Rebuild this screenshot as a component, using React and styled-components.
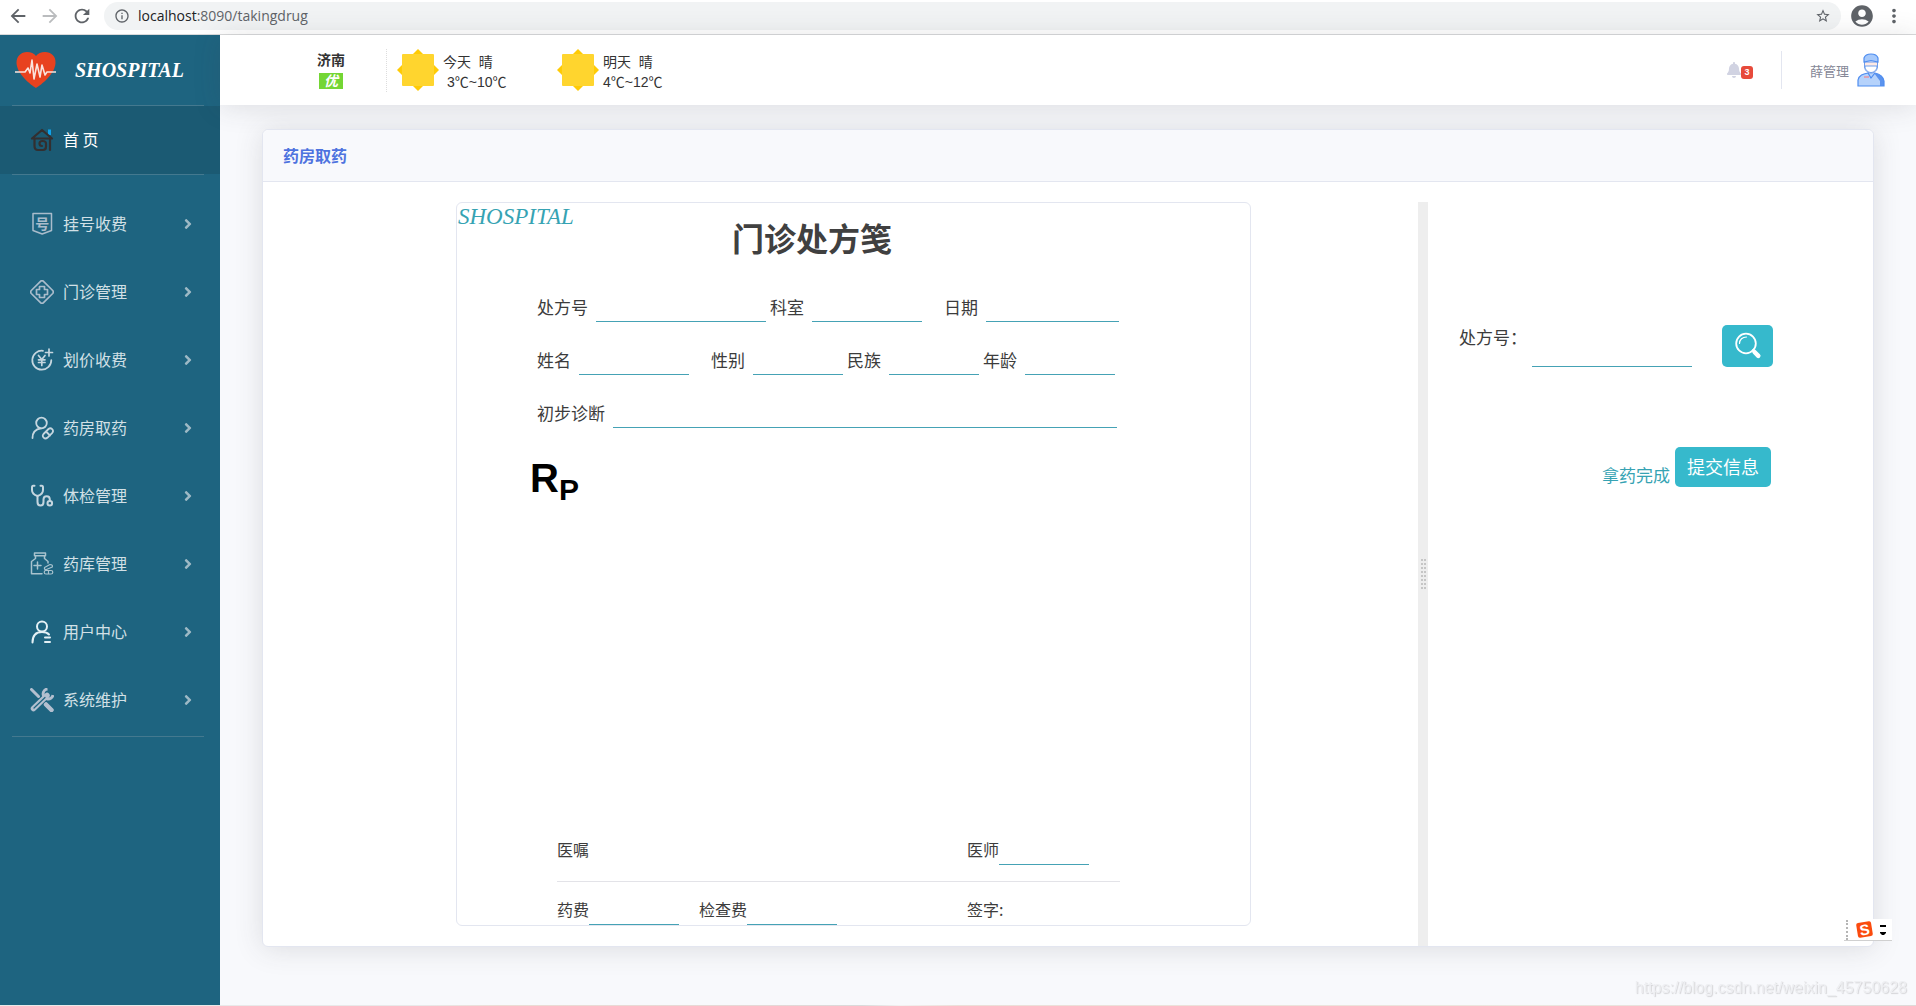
import React, { useState } from "react";
import styled, { createGlobalStyle } from "styled-components";
import {
    MdArrowBack,
    MdArrowForward,
    MdRefresh,
    MdInfoOutline,
    MdStarBorder,
    MdAccountCircle,
    MdMoreVert,
} from "react-icons/md";
import { FaAngleRight, FaBell } from "react-icons/fa";

const GlobalStyle = createGlobalStyle`
    *, *::before, *::after {
        box-sizing: border-box;
    }

    body {
        margin: 0;
        font-family: "Noto Sans CJK SC", "Noto Sans", sans-serif;
        font-size: 16px;
        color: #3c3c3c;
        background: #f8f9fc;
    }

    button, input {
        font: inherit;
    }

    svg {
        display: block;
        flex: none;
    }
`;

const Window = styled.div`
    min-height: 100vh;
    display: flex;
    flex-direction: column;
`;

/* browser toolbar */

const BrowserBar = styled.header`
    display: flex;
    align-items: center;
    gap: 8px;
    padding: 2px 11px 4px 7px;
    background: #ffffff;
    border-bottom: 1px solid #d9dadb;
`;

const BrowserButtons = styled.div`
    display: flex;
    gap: 10px;
    margin-right: 3px;
`;

const IconButton = styled.button`
    display: flex;
    padding: 0;
    border: none;
    background: none;
    cursor: pointer;
    color: ${({ $muted }) => ($muted ? "#babcbe" : "#5f6368")};
`;

const AddressBar = styled.div`
    flex: 1;
    display: flex;
    align-items: center;
    gap: 8px;
    height: 28px;
    padding: 0 10px;
    border-radius: 14px;
    background: #f1f3f4;
    color: #5f6368;
`;

const Address = styled.span`
    flex: 1;
    font-family: "Open Sans", "Noto Sans", sans-serif;
    font-size: 14px;
    line-height: 28px;

    b {
        font-weight: 400;
        color: #202124;
    }
`;

/* sidebar */

const Shell = styled.div`
    flex: 1;
    display: flex;
`;

const Sidebar = styled.nav`
    flex: none;
    width: 220px;
    background: #1e6480;
`;

const Brand = styled.a`
    display: flex;
    align-items: center;
    gap: 18px;
    height: 70px;
    padding: 0 15px;
    font-family: "Liberation Serif", serif;
    font-size: 20px;
    font-style: italic;
    font-weight: 700;
    color: #ffffff;
    text-decoration: none;
`;

const Divider = styled.hr`
    height: 1px;
    margin: 0 16px 0 12px;
    border: none;
    background: #44798f;
`;

const NavList = styled.ul`
    margin: 0;
    padding: ${({ $spaced }) => ($spaced ? "15px 0 2px" : "0")};
    list-style: none;
`;

const NavLink = styled.a`
    display: flex;
    align-items: center;
    gap: 9px;
    height: 68px;
    padding: 0 24px 0 30px;
    color: ${({ $active }) => ($active ? "#ffffff" : "#d2e0e6")};
    background: ${({ $active }) => ($active ? "#1b5a73" : "transparent")};
    text-decoration: none;

    span {
        flex: 1;
        padding-bottom: 3px;
    }
`;

/* top bar */

const Main = styled.div`
    flex: 1;
    min-width: 0;
`;

const Topbar = styled.div`
    display: flex;
    align-items: center;
    justify-content: space-between;
    height: 70px;
    padding: 0 31px 0 97px;
    background: #ffffff;
    box-shadow: 0 2px 28px rgba(58, 59, 69, 0.15);
`;

const Weather = styled.div`
    display: flex;
    align-items: center;
    font-family: "Liberation Sans", "Noto Sans CJK SC", sans-serif;
    font-size: 14px;
    line-height: 20px;
    color: #333333;
`;

const City = styled.div`
    display: flex;
    flex-direction: column;
    align-items: center;
    gap: 4px;
    margin-right: 41px;
    font-weight: 700;
    line-height: 18px;
`;

const AirQuality = styled.em`
    width: 24px;
    line-height: 16px;
    text-align: center;
    color: #ffffff;
    background: #74d634;
`;

const Forecast = styled.div`
    display: flex;
    align-items: center;
    gap: 4px;
    width: 160px;
    padding-left: 10px;
    border-left: 1px dotted ${({ $first }) => ($first ? "#dddddd" : "transparent")};
`;

const ForecastText = styled.div`
    padding-top: 3px;
`;

const Temperature = styled.div`
    padding-left: ${({ $indent }) => ($indent ? "4px" : "0")};
`;

const UserArea = styled.div`
    display: flex;
    align-items: center;
`;

const Alerts = styled.button`
    display: flex;
    align-items: center;
    padding: 0;
    border: none;
    background: none;
    color: #d1d3e2;
    cursor: pointer;

    svg {
        width: 14px;
        height: 16px;
    }
`;

const AlertCount = styled.span`
    width: 12px;
    margin-top: 4px;
    border-radius: 3px;
    background: #e74a3b;
    color: #ffffff;
    font-family: "Liberation Sans", sans-serif;
    font-size: 9px;
    font-weight: 700;
    line-height: 13px;
    text-align: center;
`;

const UserDivider = styled.div`
    width: 1px;
    height: 38px;
    margin: 0 28px;
    background: #e3e6f0;
`;

const UserLink = styled.a`
    display: flex;
    align-items: center;
    gap: 8px;
    font-size: 13px;
    color: #858796;
    text-decoration: none;
`;

/* card */

const Content = styled.main`
    padding: 24px 42px 58px;
`;

const Card = styled.section`
    border: 1px solid #e3e6f0;
    border-radius: 6px;
    background: #ffffff;
    box-shadow: 0 2px 28px rgba(58, 59, 69, 0.15);
`;

const CardTitle = styled.h6`
    margin: 0;
    padding: 0 20px;
    border-bottom: 1px solid #e3e6f0;
    border-radius: 6px 6px 0 0;
    background: #f8f9fc;
    color: #4e73df;
    font-size: 16px;
    font-weight: 700;
    line-height: 51px;
`;

const CardBody = styled.div`
    display: grid;
    grid-template-columns: 1155fr 10px 445fr;
    padding-top: 20px;
`;

const Splitter = styled.div`
    display: flex;
    align-items: center;
    justify-content: center;
    background: #eeeeee;
`;

/* prescription sheet */

const SheetColumn = styled.div`
    display: flex;
    justify-content: center;
    padding: 0 167px 20px 193px;
`;

const Sheet = styled.form`
    flex: 1;
    border: 1px solid #e3e6f0;
    border-radius: 6px;
`;

const SheetHeader = styled.div`
    display: flex;
    align-items: flex-start;
`;

const SheetLogo = styled.div`
    width: 275px;
    padding: 1px 0 0 1px;
    font-family: "Liberation Serif", serif;
    font-size: 23px;
    font-style: italic;
    line-height: 26px;
    color: #36a3b3;
`;

const SheetTitle = styled.h2`
    margin: 0;
    padding: 10px 0 2px;
    font-size: 32px;
    font-weight: 700;
    line-height: 48px;
    color: #404040;
`;

const Patient = styled.div`
    display: flex;
    flex-direction: column;
    gap: 25px;
    width: 580px;
    margin: 31px 0 0 80px;
`;

const Row = styled.div`
    display: flex;
    gap: ${({ $gap }) => $gap || 4}px;
`;

const Field = styled.label`
    display: flex;
    align-items: flex-start;
    flex: ${({ $grow }) => ($grow ? 1 : "none")};
    gap: ${({ $tight }) => ($tight ? 0 : 8)}px;
    margin-right: ${({ $apart }) => ($apart ? 18 : 0)}px;
    font-size: ${({ $tight }) => ($tight ? 16 : 17)}px;
    line-height: ${({ $tight }) => ($tight ? 24 : 26)}px;
    white-space: nowrap;
`;

const Line = styled.input`
    flex: ${({ $width }) => ($width ? "none" : 1)};
    width: ${({ $width }) => ($width ? `${$width}px` : "auto")};
    min-width: 0;
    height: ${({ $tall }) => ($tall ? 42 : 28)}px;
    padding: 0;
    border: none;
    border-bottom: 1px solid #45a2b5;
    background: transparent;
    outline: none;
`;

const Rp = styled.div`
    height: 48px;
    margin: 28px 0 0 73px;
    font-family: "Liberation Sans", sans-serif;
    font-size: 40px;
    font-weight: 700;
    line-height: 44px;
    color: #000000;

    sub {
        font-size: 30px;
        line-height: 30px;
        vertical-align: -8px;
    }
`;

const DrugList = styled.div`
    min-height: 333px;
`;

const SheetFooter = styled.div`
    width: 563px;
    margin-left: 100px;
`;

const FooterRow = styled.div`
    display: grid;
    grid-template-columns: 410px 1fr;
    font-size: 16px;
    line-height: 24px;
`;

const FooterRule = styled.hr`
    height: 1px;
    margin: 16px 0 15px;
    border: none;
    background: #e3e3e8;
`;

/* search panel */

const SearchPanel = styled.form`
    width: 345px;
    padding: 123px 0 0 31px;
    font-size: 17px;
`;

const SearchRow = styled.div`
    display: flex;
    align-items: flex-start;

    label {
        width: 73px;
        line-height: 24px;
        white-space: nowrap;
    }
`;

const Button = styled.button`
    display: flex;
    align-items: center;
    justify-content: center;
    border: none;
    border-radius: 5px;
    background: #36b9cc;
    color: #ffffff;
    cursor: pointer;
`;

const SearchButton = styled(Button)`
    width: 51px;
    height: 42px;
    margin-left: 30px;
`;

const SubmitButton = styled(Button)`
    height: 40px;
    padding: 0 12px 2px;
    font-size: 18px;
`;

const SubmitRow = styled.div`
    display: flex;
    align-items: flex-end;
    justify-content: flex-end;
    gap: 5px;
    margin: 80px 2px 0 0;
`;

const Status = styled.span`
    line-height: 24px;
    color: #36a3b3;
`;

/* things floating over the page */

const ImeBar = styled.div`
    position: fixed;
    right: 24px;
    bottom: 65px;
    display: flex;
    align-items: center;
    justify-content: space-between;
    width: 48px;
    height: 22px;
    padding: 0 6px 0 2px;
    border-bottom: 1px solid #d0d0d0;
    background: #ffffff;
`;

const ImeGrip = styled.div`
    height: 20px;
    border-left: 2px dotted #b5b5b5;
`;

const ImeLogo = styled.span`
    width: 15px;
    border-radius: 2px;
    background: #fb4b0e;
    color: #ffffff;
    font-family: "Liberation Sans", sans-serif;
    font-size: 15px;
    font-weight: 700;
    line-height: 15px;
    text-align: center;
    transform: rotate(-9deg);
`;

const Watermark = styled.div`
    position: fixed;
    right: 9px;
    bottom: 6px;
    font-family: "Liberation Sans", sans-serif;
    font-size: 16px;
    line-height: 24px;
    color: #eeeff2;
    text-shadow: 1px 1px 1px #d4d4d7;
`;

const BottomEdge = styled.div`
    height: 2px;
    background: linear-gradient(to right, #e9e9e9 22%, #ecdcd4 26%, #e6d8d6 40%, #dadada 45%, #f3f1f0 47%, #ecdfd8 50%, #ece6de 80%, #dedad9);
`;

const HeartLogo = () => (
    <svg width="42" height="38" viewBox="0 0 42 38" fill="none">
        <path
            d="M21 37C16 34 2 23 1.500 12C1.500 5 6 1 12 1C16 1 19 2.500 21 5C23 2.500 26 1 30 1C36 1 41 5 40.500 12C40 23 26 34 21 37Z"
            fill="#e8421f"
        />
        <path
            d="M0 21H10L13 17L15 22L17 9L19 28L22 13L25 26L27 14L30 24L32 21H41"
            stroke="#fbe3dc"
            strokeWidth="1.600"
            strokeLinejoin="round"
        />
    </svg>
);

const HomeIcon = () => (
    <svg width="24" height="24" viewBox="0 0 24 24" fill="none" strokeLinecap="round" strokeLinejoin="round">
        <path d="M19.500 7V1.500" stroke="#10a2ea" strokeWidth="3" strokeLinecap="butt" />
        <path
            d="M2 10.500L12 2L22 10.500H2M20 10.500V22M4.500 11V18C4.500 21 6 22 8 22H13C15.500 22 16 20.500 16 18.500V15.500C16 13.500 14 13 12.500 13C10.500 13 9.500 14 9.500 15.500C9.500 18 11 18 12 18"
            stroke="#332f30"
            strokeWidth="2.200"
        />
    </svg>
);

const LineIcon = ({ children, color = "#c5d6df", width = 1.5 }) => (
    <svg
        width="24"
        height="24"
        viewBox="0 0 24 24"
        fill="none"
        stroke={color}
        strokeWidth={width}
        strokeLinecap="round"
        strokeLinejoin="round"
    >
        {children}
    </svg>
);

const RegisterIcon = () => (
    <LineIcon color="#a9bccb">
        <path d="M3 1.500H21.500V18.500L12.200 22L3 18.500Z" />
        <text x="5.200" y="16.500" fontSize="14" fontWeight="700" fill="#a9bccb" stroke="none">
            号
        </text>
    </LineIcon>
);

const ClinicIcon = () => (
    <LineIcon color="#a9bccb" width={1.7}>
        <path d="M10.500 1.300Q12 0 13.500 1.300L22.700 10.500Q24 12 22.700 13.500L13.500 22.700Q12 24 10.500 22.700L1.300 13.500Q0 12 1.300 10.500Z" />
        <path d="M9.500 6.500H14.500V9.500H17.500V14.500H14.500V17.500H9.500V14.500H6.500V9.500H9.500Z" />
    </LineIcon>
);

const PriceIcon = () => (
    <LineIcon width={1.7}>
        <path d="M13 2.800A9.500 9.500 0 1 0 21.300 12M19 1V8M15.500 4.500H22.500" />
        <path d="M8.500 7.500L11.800 11.500L15 7.500M11.800 11.500V17.500M8.500 11.800H15M8.500 14.500H15" />
    </LineIcon>
);

const PharmacyIcon = () => (
    <LineIcon width={1.8}>
        <circle cx="11.500" cy="7" r="5.300" />
        <path d="M2.500 22C2.500 16.500 5.500 13 11 12.300" />
        <path d="M13.500 18L18.500 13A2.700 2.700 0 0 1 22.300 16.800L17.300 21.800A2.700 2.700 0 0 1 13.500 18ZM16 15.500L20 19.500" />
    </LineIcon>
);

const StethoscopeIcon = () => (
    <LineIcon width={2}>
        <path d="M4.500 1.800H3.200Q2 1.800 2 3.500V6C2 9 4 11 7.500 12C11 11 13 9 13 6V3.500Q13 1.800 11.800 1.800H10.500" />
        <path d="M7.500 12V18C7.500 22.800 13.500 22.800 13.500 18V15.500C13.500 11 19.800 11 19.800 15.500V17" />
        <circle cx="19.800" cy="19.300" r="2.300" />
    </LineIcon>
);

const StoreIcon = () => (
    <LineIcon color="#a9c3ce">
        <path d="M4.500 1H15.500V3.800H4.500ZM5.500 4V6.500L1.500 9.500V21.800H12M14.500 4V6.500L18 9.500V11M7.500 10V17M4 13.500H11" />
        <path d="M14.500 15.500L20 12.500Q23 12.500 22.300 15L16.500 17.500Q14 18 14.500 15.500ZM16 18.500H21Q22.800 18.500 22.800 20.200Q22.800 22 21 22H16Q14.200 22 14.200 20.200Q14.200 18.500 16 18.500ZM18.500 18.500V22" strokeWidth="1.200" />
    </LineIcon>
);

const UserIcon = () => (
    <LineIcon color="#e3f0f5" width={2}>
        <circle cx="12" cy="6.500" r="5" />
        <path d="M2.500 22.500C2.500 16.500 5 12 12 12C15 12 17.500 12.800 19 14.500M15 17.500H20M15 22H20" />
    </LineIcon>
);

const ToolsIcon = () => (
    <svg width="24" height="24" viewBox="0 0 24 24" fill="none" stroke="#b3bfcf" strokeLinecap="round">
        <path d="M1.500 1.500L8.500 8.500" strokeWidth="3" />
        <path d="M16 16.500L21.500 22" strokeWidth="4.500" />
        <path d="M17 7.500L3.500 20.500" strokeWidth="5.500" />
        <path d="M17.500 1A5 5 0 1 0 23 7" strokeWidth="3" strokeLinecap="butt" />
        <path d="M15 9.500L4 20" stroke="#1e6480" strokeWidth="1.200" />
    </svg>
);

const SunIcon = () => (
    <svg width="42" height="42" viewBox="0 0 42 42">
        <path d="M21 0L42 21L21 42L0 21Z" fill="#ffcb05" />
        <rect x="5" y="5" width="32" height="32" rx="1" fill="#ffd52e" />
    </svg>
);

const DoctorIcon = () => (
    <svg width="28" height="34" viewBox="0 0 28 34">
        <path d="M1 33V27C2 22 6 21 11 20H18C23 21 26 23 27 28V33Z" fill="#b5d2fb" />
        <path d="M17 20C23 21 26 23 27 28V33H23V28Z" fill="#5b93ee" />
        <path d="M1 33V27C2 22 6 21 11 20L14 25L18 20C23 21 26 23 27 28V33Z" fill="none" stroke="#4f8df0" strokeWidth="1.200" />
        <path d="M7.500 9V14C8 18 11 20 14 20S20 18 20.500 14V9Z" fill="#fde9e4" stroke="#6f9cea" strokeWidth="1" />
        <path d="M8 13H20C20 17 17 19.500 14 19.500S8 17 8 13Z" fill="#ffffff" stroke="#6d9fee" strokeWidth="1" />
        <path d="M7 9V5C8 2 10.500 1 14 1S20 2 21 5V9L14 7.500Z" fill="#a6c9fb" stroke="#4f8df0" strokeWidth="1.200" />
        <path d="M7 24H12" stroke="#f0858d" strokeWidth="1.200" />
    </svg>
);

const SearchIcon = () => (
    <svg width="28" height="28" viewBox="0 0 28 28" fill="none" stroke="#ffffff" strokeLinecap="round">
        <circle cx="12" cy="11.500" r="9.800" strokeWidth="1.800" />
        <path d="M5.500 11.500C5.500 7.500 8.500 5 12.500 5" strokeWidth="1.200" />
        <path d="M18.800 18.300L20 19.500" strokeWidth="2" />
        <path d="M20.500 20L24.300 23.800" strokeWidth="4.500" />
    </svg>
);

const GripIcon = () => (
    <svg width="5" height="30" viewBox="0 0 5 30" fill="#c6c6c6">
        {[0, 4, 8, 12, 16, 20, 24, 28].map((y) => (
            <path key={y} d={`M0 ${y}h2v2h-2zM3 ${y}h2v2h-2z`} />
        ))}
    </svg>
);

const ImeMenuIcon = () => (
    <svg width="6" height="12" viewBox="0 0 6 12">
        <path d="M0 1H6V3H0ZM0 8H6V9L4 11H2L0 9Z" fill="#000000" />
    </svg>
);

const menu = [
    { title: "挂号收费", Icon: RegisterIcon },
    { title: "门诊管理", Icon: ClinicIcon },
    { title: "划价收费", Icon: PriceIcon },
    { title: "药房取药", Icon: PharmacyIcon },
    { title: "体检管理", Icon: StethoscopeIcon },
    { title: "药库管理", Icon: StoreIcon },
    { title: "用户中心", Icon: UserIcon },
    { title: "系统维护", Icon: ToolsIcon },
];

const forecast = [
    { day: "今天", sky: "晴", range: "3℃~10℃" },
    { day: "明天", sky: "晴", range: "4℃~12℃" },
];

const Browser = () => (
    <BrowserBar>
        <BrowserButtons>
            <IconButton aria-label="后退"><MdArrowBack size={22} /></IconButton>
            <IconButton aria-label="前进" $muted><MdArrowForward size={22} /></IconButton>
            <IconButton aria-label="刷新"><MdRefresh size={22} /></IconButton>
        </BrowserButtons>
        <AddressBar>
            <MdInfoOutline size={16} />
            <Address><b>localhost</b>:8090/takingdrug</Address>
            <IconButton aria-label="收藏"><MdStarBorder size={16} /></IconButton>
        </AddressBar>
        <IconButton aria-label="账户"><MdAccountCircle size={26} /></IconButton>
        <IconButton aria-label="菜单"><MdMoreVert size={22} /></IconButton>
    </BrowserBar>
);

const SideNav = () => (
    <Sidebar>
        <Brand href="#home">
            <HeartLogo />
            SHOSPITAL
        </Brand>
        <Divider />
        <NavList>
            <li>
                <NavLink href="#home" $active>
                    <HomeIcon />
                    <span>首 页</span>
                </NavLink>
            </li>
        </NavList>
        <Divider />
        <NavList $spaced>
            {menu.map(({ title, Icon }) => (
                <li key={title}>
                    <NavLink href={`#${title}`}>
                        <Icon />
                        <span>{title}</span>
                        <FaAngleRight size={16} color="#9db9c5" />
                    </NavLink>
                </li>
            ))}
        </NavList>
        <Divider />
    </Sidebar>
);

const Header = () => (
    <Topbar>
        <Weather>
            <City>
                济南
                <AirQuality>优</AirQuality>
            </City>
            {forecast.map(({ day, sky, range }, index) => (
                <Forecast key={day} $first={index === 0}>
                    <SunIcon />
                    <ForecastText>
                        <div>{day}&nbsp; {sky}</div>
                        <Temperature $indent={index === 0}>{range}</Temperature>
                    </ForecastText>
                </Forecast>
            ))}
        </Weather>
        <UserArea>
            <Alerts aria-label="通知">
                <FaBell />
                <AlertCount>3</AlertCount>
            </Alerts>
            <UserDivider />
            <UserLink href="#profile">
                薛管理
                <DoctorIcon />
            </UserLink>
        </UserArea>
    </Topbar>
);

const Prescription = () => (
    <Sheet>
        <SheetHeader>
            <SheetLogo>SHOSPITAL</SheetLogo>
            <SheetTitle>门诊处方笺</SheetTitle>
        </SheetHeader>
        <Patient>
            <Row>
                <Field>处方号<Line $width={170} /></Field>
                <Field $apart>科室<Line $width={110} /></Field>
                <Field>日期<Line $width={133} /></Field>
            </Row>
            <Row>
                <Field $apart>姓名<Line $width={110} /></Field>
                <Field>性别<Line $width={90} /></Field>
                <Field>民族<Line $width={90} /></Field>
                <Field>年龄<Line $width={90} /></Field>
            </Row>
            <Row>
                <Field $grow>初步诊断<Line /></Field>
            </Row>
        </Patient>
        <Rp>R<sub>P</sub></Rp>
        <DrugList />
        <SheetFooter>
            <FooterRow>
                <span>医嘱</span>
                <Field $tight>医师<Line $width={90} /></Field>
            </FooterRow>
            <FooterRule />
            <FooterRow>
                <Row $gap={20}>
                    <Field $tight>药费<Line $width={90} /></Field>
                    <Field $tight>检查费<Line $width={90} /></Field>
                </Row>
                <span>签字:</span>
            </FooterRow>
        </SheetFooter>
    </Sheet>
);

const TakeDrug = () => {
    const [number, setNumber] = useState("");

    return (
        <SearchPanel onSubmit={(e) => e.preventDefault()}>
            <SearchRow>
                <label htmlFor="number">处方号：</label>
                <Line id="number" $width={160} $tall value={number} onChange={(e) => setNumber(e.target.value)} />
                <SearchButton type="button" aria-label="查询"><SearchIcon /></SearchButton>
            </SearchRow>
            <SubmitRow>
                <Status>拿药完成</Status>
                <SubmitButton type="submit">提交信息</SubmitButton>
            </SubmitRow>
        </SearchPanel>
    );
};

const App = () => {
    return (
        <>
            <GlobalStyle />
            <Window>
                <Browser />
                <Shell>
                    <SideNav />
                    <Main>
                        <Header />
                        <Content>
                            <Card>
                                <CardTitle>药房取药</CardTitle>
                                <CardBody>
                                    <SheetColumn>
                                        <Prescription />
                                    </SheetColumn>
                                    <Splitter><GripIcon /></Splitter>
                                    <TakeDrug />
                                </CardBody>
                            </Card>
                        </Content>
                    </Main>
                </Shell>
                <BottomEdge />
            </Window>
            <ImeBar>
                <ImeGrip />
                <ImeLogo>S</ImeLogo>
                <ImeMenuIcon />
            </ImeBar>
            <Watermark>https://blog.csdn.net/weixin_45750628</Watermark>
        </>
    );
};

export default App;
